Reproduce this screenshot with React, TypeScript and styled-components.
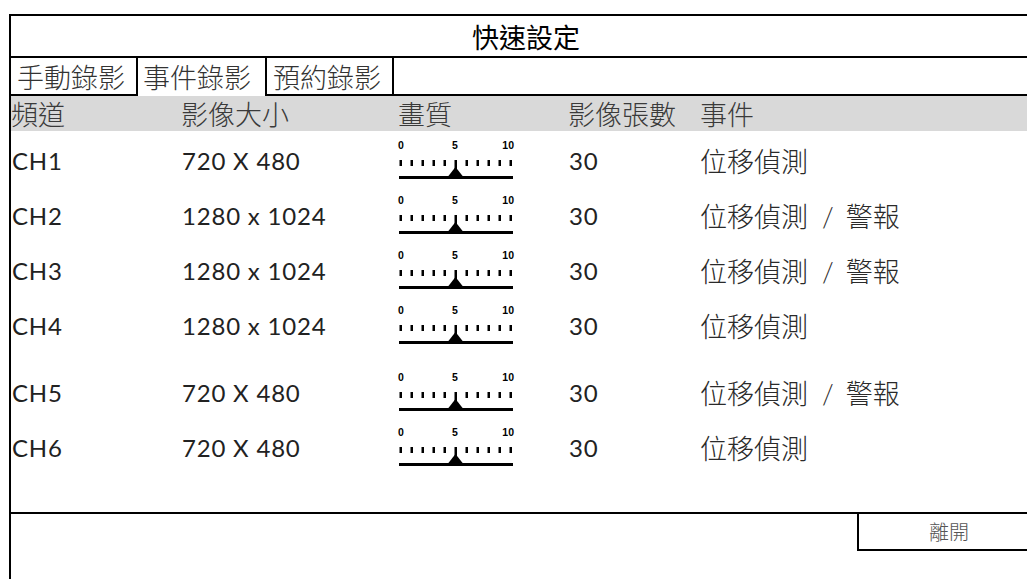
import React from "react";
import styled, { createGlobalStyle } from "styled-components";

const GlobalStyle = createGlobalStyle`
  html, body { margin: 0; padding: 0; background: #ffffff; overflow: hidden; }
  body { font-family: "Noto Sans CJK TC", "Noto Sans", sans-serif; }
`;

const CJK = `"Noto Sans CJK TC", "Noto Sans", sans-serif`;
const LATIN = `Lato, "Noto Sans CJK TC", sans-serif`;

const Panel = styled.div`
  margin: 14px 0 0 9px;
  width: 1040px;
  height: 565px;
  border-top: 2px solid #000;
  border-left: 2px solid #000;
  display: flex;
  flex-direction: column;
  box-sizing: border-box;
`;

const TitleBar = styled.div`
  height: 40px;
  flex: none;
  border-bottom: 2px solid #000;
  display: flex;
  align-items: center;
  justify-content: center;
  font-family: ${CJK};
  font-size: 27px;
  font-weight: 400;
  color: #000;
  padding-right: 8px;
`;

const TabRow = styled.div`
  display: flex;
  flex: none;
  height: 40px;
  margin: -2px 0 0 -2px;
`;

const Tab = styled.div<{ $active?: boolean }>`
  width: 129px;
  box-sizing: border-box;
  border: ${(p) => (p.$active ? "none" : "2px solid #000")};
  margin-right: ${(p) => (p.$active ? "0" : "-2px")};
  padding-left: ${(p) => (p.$active ? "7px" : "6px")};
  padding-top: 1px;
  display: flex;
  align-items: center;
  font-family: ${CJK};
  font-size: 27px;
  font-weight: 300;
  color: #333;
`;

const TabFill = styled.div`
  flex: 1;
  border-bottom: 2px solid #000;
`;

const cols = "170px 217px 170px 132px 1fr";

const HeaderRow = styled.div`
  display: grid;
  flex: none;
  grid-template-columns: ${cols};
  height: 35px;
  background: #d9d9d9;
  font-family: ${CJK};
  font-size: 27px;
  font-weight: 300;
  color: #3a3a3a;
`;

const HeadCell = styled.div`
  display: flex;
  align-items: center;
  line-height: 1;
`;

const Body = styled.div`
  display: flex;
  flex: none;
  flex-direction: column;
  padding-top: 2px;
  height: 381px;
  box-sizing: border-box;
`;

const Row = styled.div<{ $gapTop?: number }>`
  display: grid;
  grid-template-columns: ${cols};
  height: 55px;
  align-items: center;
  margin-top: ${(p) => p.$gapTop ?? 0}px;
`;

const Cell = styled.div`
  font-family: ${LATIN};
  font-size: 24px;
  font-weight: 400;
  letter-spacing: 0.8px;
  color: #222;
  white-space: nowrap;
  padding-left: 1px;
`;

const EventCell = styled.div`
  font-family: ${CJK};
  font-size: 27px;
  font-weight: 300;
  color: #2a2a2a;
  white-space: nowrap;
`;

const Slash = styled.span`
  font-family: ${LATIN};
  margin: 0 12px 0 14px;
`;

const Footer = styled.div`
  border-top: 2px solid #000;
  flex: none;
  display: flex;
  justify-content: flex-end;
  height: 40px;
`;

const ExitButton = styled.div`
  width: 192px;
  box-sizing: border-box;
  margin-top: -2px;
  height: 39px;
  border: 2px solid #000;
  display: flex;
  align-items: center;
  justify-content: center;
  padding-right: 8px;
  font-family: ${CJK};
  font-size: 20px;
  font-weight: 300;
  color: #555;
`;

const SliderSvg = styled.svg`
  display: block;
  overflow: visible;
`;

function Quality() {
  const ticks = Array.from({ length: 11 }, (_, i) => i);
  return (
    <SliderSvg width="120" height="44" viewBox="0 0 120 44">
      <g fontFamily="'Liberation Sans', Arial, sans-serif" fontWeight="bold" fontSize="10.5" fill="#000">
        <text x="0" y="10">0</text>
        <text x="57" y="10" textAnchor="middle">5</text>
        <text x="116" y="10" textAnchor="end">10</text>
      </g>
      {ticks.map((i) => (
        <rect key={i} x={1.5 + i * 11} y={21} width="2.5" height={i === 5 ? 9 : 6} fill="#000" />
      ))}
      <polygon points="57.5,28 65,37.5 50,37.5" fill="#000" />
      <rect x="1" y="37" width="114" height="3" fill="#000" />
    </SliderSvg>
  );
}

const rows = [
  { ch: "CH1", size: "720 X 480", ev: "位移偵測", alarm: false },
  { ch: "CH2", size: "1280 x 1024", ev: "位移偵測", alarm: true },
  { ch: "CH3", size: "1280 x 1024", ev: "位移偵測", alarm: true },
  { ch: "CH4", size: "1280 x 1024", ev: "位移偵測", alarm: false },
  { ch: "CH5", size: "720 X 480", ev: "位移偵測", alarm: true },
  { ch: "CH6", size: "720 X 480", ev: "位移偵測", alarm: false },
];

export default function App() {
  return (
    <>
      <GlobalStyle />
      <Panel>
        <TitleBar>快速設定</TitleBar>
        <TabRow>
          <Tab>手動錄影</Tab>
          <Tab $active>事件錄影</Tab>
          <Tab>預約錄影</Tab>
          <TabFill />
        </TabRow>
        <HeaderRow>
          <HeadCell>頻道</HeadCell>
          <HeadCell>影像大小</HeadCell>
          <HeadCell>畫質</HeadCell>
          <HeadCell>影像張數</HeadCell>
          <HeadCell>事件</HeadCell>
        </HeaderRow>
        <Body>
          {rows.map((r, i) => (
            <Row key={r.ch} $gapTop={i === 4 ? 12 : 0}>
              <Cell>{r.ch}</Cell>
              <Cell>{r.size}</Cell>
              <div>
                <Quality />
              </div>
              <Cell>30</Cell>
              <EventCell>
                {r.ev}
                {r.alarm && (
                  <>
                    <Slash>/</Slash>警報
                  </>
                )}
              </EventCell>
            </Row>
          ))}
        </Body>
        <Footer>
          <ExitButton>離開</ExitButton>
        </Footer>
      </Panel>
    </>
  );
}
